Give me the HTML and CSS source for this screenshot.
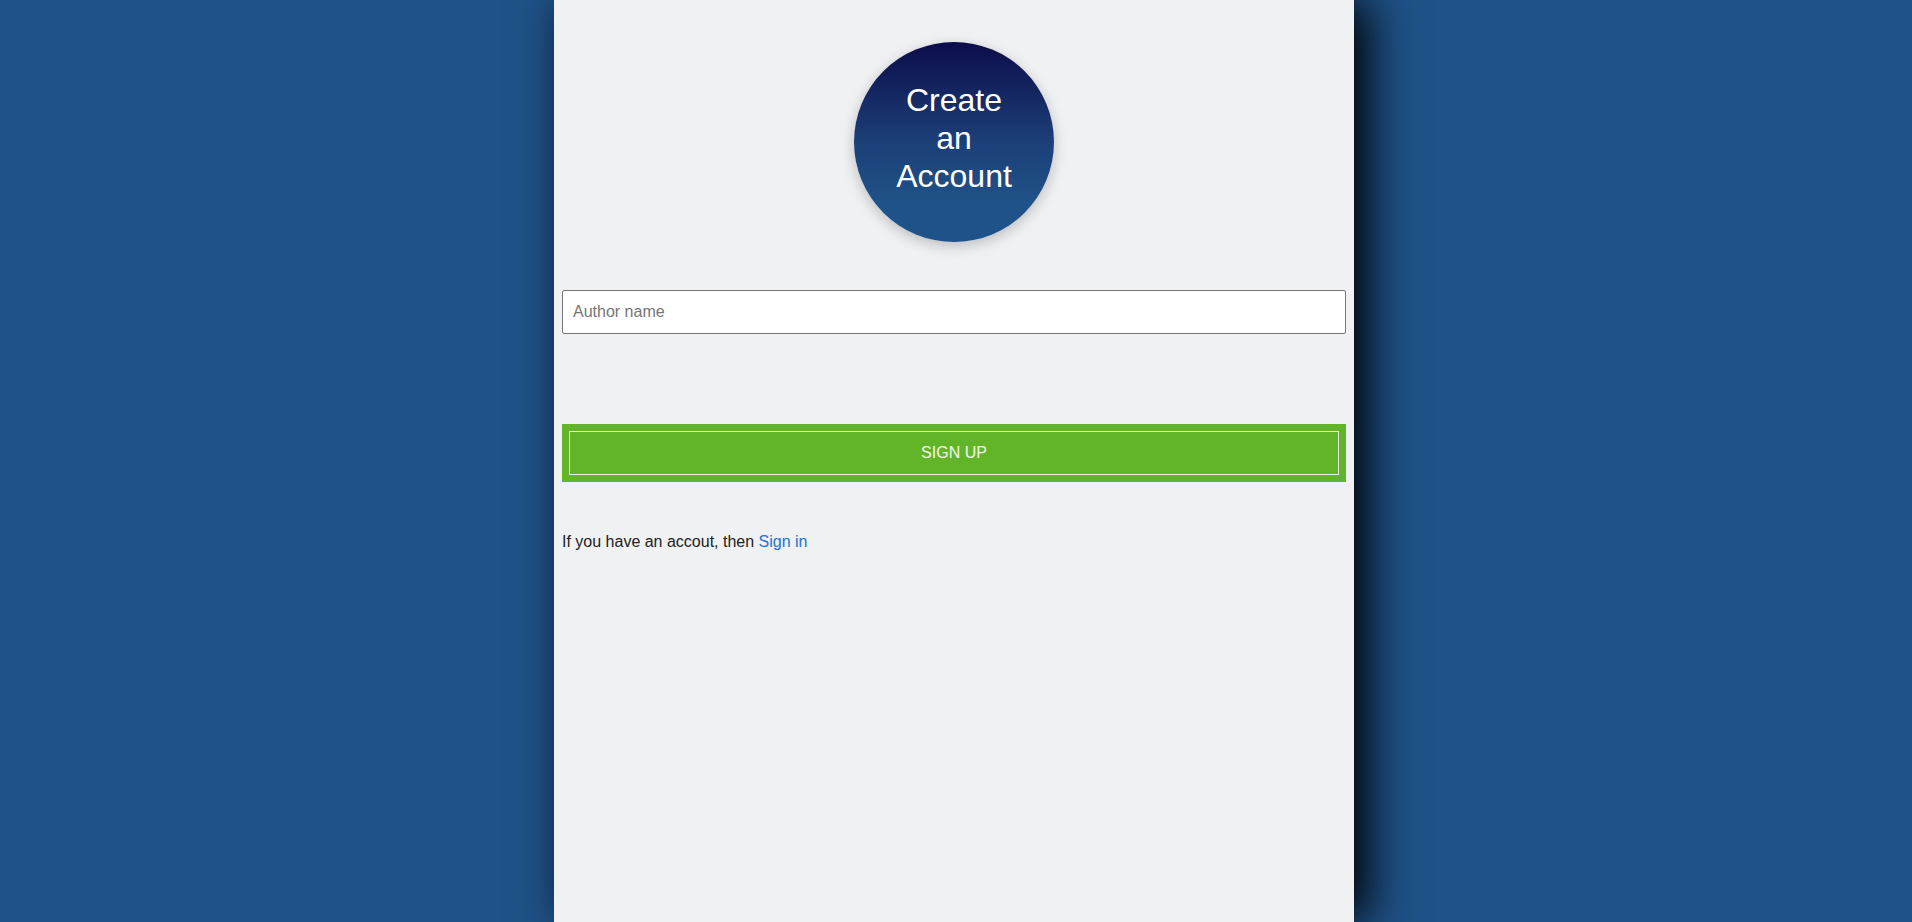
FILE: index.html
```html
<!DOCTYPE html>
<html>
<head>
<meta charset="utf-8">
<title>Create an Account</title>
<link rel="stylesheet" href="styles.css">
</head>
<body>
<main class="panel">
  <div class="badge"><span>Create an Account</span></div>
  <form class="form">
    <input class="field" type="text" placeholder="Author name">
    <button class="btn" type="button">SIGN UP</button>
  </form>
  <p class="note">If you have an accout, then <a href="#">Sign in</a></p>
</main>
</body>
</html>
```

FILE: styles.css
```css
html, body {
  margin: 0;
  height: 100%;
}
body {
  background: #1f5288;
  font-family: "Liberation Sans", Arial, sans-serif;
  overflow: hidden;
}
.panel {
  box-sizing: border-box;
  width: 800px;
  min-height: 100vh;
  margin: 0 0 0 calc(50% - 402px);
  padding: 42px 8px 0;
  background: #f0f1f3;
  box-shadow: 14px 0 44px 0 #000;
  display: flex;
  flex-direction: column;
}
.badge {
  align-self: center;
  width: 200px;
  height: 200px;
  border-radius: 50%;
  background: linear-gradient(to bottom, #0c0d4a 0%, #1c3f78 50%, #1f5288 80%);
  box-shadow: 0 4px 14px rgba(0,0,0,0.22);
  display: flex;
  align-items: center;
  justify-content: center;
  text-align: center;
  color: #fff;
  font-size: 32px;
  line-height: 38px;
}
.badge span {
  width: 130px;
  margin-top: -8px;
}
.form {
  display: flex;
  flex-direction: column;
  margin-top: 48px;
}
.field {
  box-sizing: border-box;
  height: 44px;
  border: 1px solid #767676;
  border-radius: 2px;
  padding: 0 10px;
  font-family: "Liberation Sans", Arial, sans-serif;
  font-size: 16px;
  color: #222;
  background: #fff;
}
.field::placeholder {
  color: #757575;
}
.btn {
  margin-top: 90px;
  height: 58px;
  border: none;
  background: #62b529;
  color: #f2f7ea;
  font-family: "Liberation Sans", Arial, sans-serif;
  font-size: 16px;
  outline: 1px solid #e6f3dc;
  outline-offset: -8px;
  cursor: pointer;
}
.note {
  margin: 51px 0 0;
  font-size: 16px;
  line-height: 18px;
  color: #222;
}
.note a {
  color: #1a73d9;
  text-decoration: none;
}
```
